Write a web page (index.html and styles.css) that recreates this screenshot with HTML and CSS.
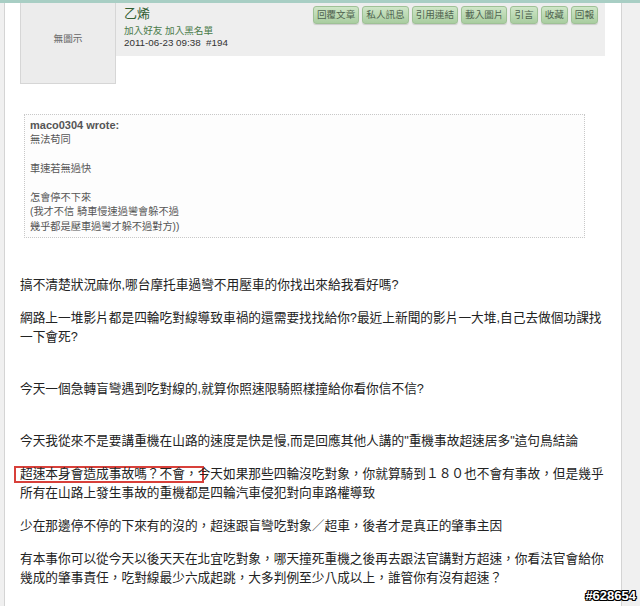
FILE: index.html
```html
<!DOCTYPE html>
<html lang="zh-Hant">
<head>
    <meta charset="UTF-8">
    <title>乙烯 #194</title>
    <link rel="stylesheet" href="styles.css">
</head>
<body>

    <div class="topband"></div>

    <div class="page">
        <div class="post">

            <!-- cabeçalho do post -->
            <div class="post-head">
                <div class="avatar">無圖示</div>
                <div class="userbar">
                    <div class="userinfo">
                        <div class="username">乙烯</div>
                        <div class="userlinks"><a href="#">加入好友</a> <a href="#">加入黑名單</a></div>
                        <div class="postdate">2011-06-23 09:38 &nbsp;#194</div>
                    </div>
                    <div class="tools">
                        <a class="tool" href="#">回覆文章</a>
                        <a class="tool" href="#">私人訊息</a>
                        <a class="tool" href="#">引用連結</a>
                        <a class="tool" href="#">載入圖片</a>
                        <a class="tool" href="#">引言</a>
                        <a class="tool" href="#">收藏</a>
                        <a class="tool" href="#">回報</a>
                    </div>
                </div>
            </div>

            <!-- conteúdo -->
            <div class="post-body">
                <div class="quote">
                    <div class="quote-author">maco0304 wrote:</div>
                    無法苟同<br>
                    <br>
                    車速若無過快<br>
                    <br>
                    怎會停不下來<br>
                    (我才不信 騎車慢速過彎會躲不過<br>
                    幾乎都是壓車過彎才躲不過對方))
                </div>

                <p>搞不清楚狀況麻你,哪台摩托車過彎不用壓車的你找出來給我看好嗎?</p>

                <p>網路上一堆影片都是四輪吃對線導致車禍的還需要找找給你?最近上新聞的影片一大堆,自己去做個功課找<br>一下會死?</p>

                <p class="after-gap">今天一個急轉盲彎遇到吃對線的,就算你照速限騎照樣撞給你看你信不信?</p>

                <p class="after-gap">今天我從來不是要講重機在山路的速度是快是慢,而是回應其他人講的"重機事故超速居多"這句鳥結論</p>

                <p><span class="marked">超速本身會造成事故嗎？不會，</span>今天如果那些四輪沒吃對象，你就算騎到１８０也不會有事故，但是幾乎<br>所有在山路上發生事故的重機都是四輪汽車侵犯對向車路權導致</p>

                <p>少在那邊停不停的下來有的沒的，超速跟盲彎吃對象／超車，後者才是真正的肇事主因</p>

                <p>有本事你可以從今天以後天天在北宜吃對象，哪天撞死重機之後再去跟法官講對方超速，你看法官會給你<br>幾成的肇事責任，吃對線最少六成起跳，大多判例至少八成以上，誰管你有沒有超速？</p>
            </div>

        </div>
    </div>

    <div class="watermark">#628654</div>

</body>
</html>
```

FILE: styles.css
```css
* {
    margin: 0;
    padding: 0;
    box-sizing: border-box;
}

body {
    background-color: #f0f0f0;
    font-family: "Liberation Sans", "Noto Sans CJK TC", sans-serif;
    color: #222;
    overflow: hidden;
}

a {
    text-decoration: none;
}

.topband {
    height: 3px;
    background-color: #a8cec4;
}

.page {
    margin-left: 4px;
    width: 618px;
    min-height: 603px;
    background-color: #fff;
    border-left: 1px solid #d4d4d4;
    border-right: 1px solid #d4d4d4;
    padding: 0 16px 0 15px;
}

/* cabeçalho */
.post-head {
    display: flex;
    align-items: flex-start;
}

.avatar {
    width: 96px;
    height: 81px;
    background-color: #ececec;
    border: 1px solid #d6d6d6;
    border-top: none;
    color: #666;
    font-size: 9.6px;
    text-align: center;
    padding-top: 28px;
}

.userbar {
    flex: 1;
    height: 53px;
    background-color: #eeeeee;
    display: flex;
    justify-content: space-between;
    align-items: flex-start;
    padding: 0 7px 0 8px;
}

.userinfo {
    padding-top: 3px;
}

.username {
    font-size: 13px;
    line-height: 16px;
    color: #335f33;
    margin-bottom: 3px;
}

.userlinks {
    font-size: 9.6px;
    line-height: 12px;
}

.userlinks a {
    color: #4a7b4a;
}

.postdate {
    font-size: 9.8px;
    line-height: 12px;
    color: #333;
}

.tools {
    display: flex;
    gap: 3px;
    margin-top: 3px;
}

.tool {
    display: block;
    font-size: 9.6px;
    line-height: 14px;
    padding: 1px 3px;
    color: #4f634f;
    background: linear-gradient(#cfe6c8, #a9cda0);
    border: 1px solid #9fc196;
    border-radius: 3px;
    box-shadow: 0 1px 1px rgba(0, 0, 0, 0.15);
}

/* conteúdo */
.post-body {
    padding-top: 30px;
}

.quote {
    margin: 0 20px 38px 4px;
    border: 1px dotted #c8c8c8;
    background-color: #fdfdfd;
    padding: 3px 5px;
    font-size: 10.2px;
    line-height: 14.5px;
    color: #555;
}

.quote-author {
    font-size: 11px;
    font-weight: bold;
}

.post-body p {
    font-size: 12.7px;
    line-height: 19px;
    margin-bottom: 14px;
    white-space: nowrap;
}

.post-body p.after-gap {
    padding-top: 19px;
}

.marked {
    display: inline-block;
    line-height: 13px;
    border: 2px solid #d8403a;
    padding: 0 4px;
    margin: 0 -6px;
}

.watermark {
    position: absolute;
    right: 4px;
    bottom: 3px;
    font-size: 13px;
    font-weight: bold;
    color: #fff;
    text-shadow: 1px 0 0 #000, -1px 0 0 #000, 0 1px 0 #000, 0 -1px 0 #000,
                 1px 1px 0 #000, -1px -1px 0 #000, 1px -1px 0 #000, -1px 1px 0 #000;
}
```
